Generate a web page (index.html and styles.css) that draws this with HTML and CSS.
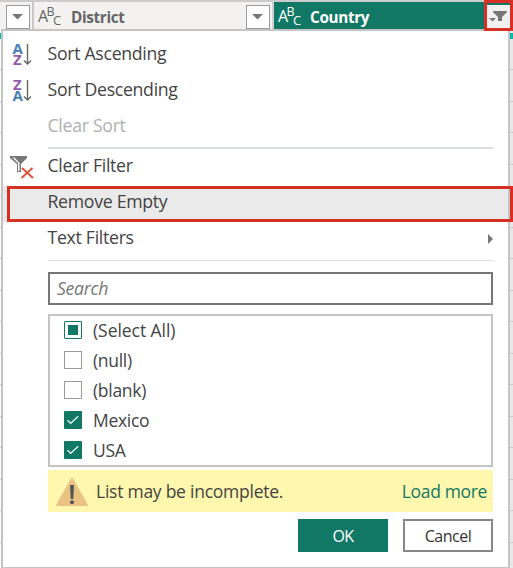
FILE: index.html
```html
<!DOCTYPE html>
<html lang="en">
<head>
<meta charset="utf-8">
<title>Column filter</title>
<link rel="stylesheet" href="styles.css">
</head>
<body>
<div class="window">
  <header class="columns">
    <div class="column column-prev"><span class="drop"><svg width="12" height="6" viewBox="0 0 12 6"><path d="M0 0h11L5.500 5.500z"/></svg></span></div>
    <div class="column column-district">
      <span class="abc"><span>A</span><span class="b">B</span><span class="c">C</span></span>
      <span class="name">District</span>
      <span class="drop"><svg width="12" height="6" viewBox="0 0 12 6"><path d="M0 0h11L5.500 5.500z"/></svg></span>
    </div>
    <div class="column column-country">
      <span class="abc"><span>A</span><span class="b">B</span><span class="c">C</span></span>
      <span class="name">Country</span>
      <span class="filter"><svg width="19" height="12" viewBox="0 0 19 12"><path d="M4 0h14v1l-5 5v4H9V6L4 1zM0 7h7L3.500 10.500z"/></svg></span>
    </div>
  </header>
  <main class="menu">
    <div class="item"><svg class="icon" width="24" height="28" viewBox="0 0 24 28"><text class="blue" x="2.500" y="13.500">A</text><text class="purple" x="3" y="25">Z</text><path class="arrow" d="M17.500 4v20M14 20.500l3.500 3.500 3.500-3.500"/></svg><span>Sort Ascending</span></div>
    <div class="item"><svg class="icon" width="24" height="28" viewBox="0 0 24 28"><text class="purple" x="3" y="13.500">Z</text><text class="blue" x="2.500" y="25">A</text><path class="arrow" d="M17.500 4v20M14 20.500l3.500 3.500 3.500-3.500"/></svg><span>Sort Descending</span></div>
    <div class="item disabled"><span>Clear Sort</span></div>
    <div class="sep thick"></div>
    <div class="item"><svg class="icon" width="26" height="28" viewBox="0 0 26 28"><path fill="#777" fill-rule="evenodd" d="M0 4h17v2l-6 6v8H7v-8L0 6zM2.500 5.500L8 11v8h1.500v-8L4.500 5.500z"/><path fill="none" stroke="#db5439" stroke-width="2" d="M12 16l11 10M22.500 16L11.500 26"/></svg><span>Clear Filter</span></div>
    <div class="item selected"><span>Remove Empty</span></div>
    <div class="item last"><span>Text Filters</span><svg class="more" width="5" height="10" viewBox="0 0 5 10"><path fill="#777" d="M0 0l5 5-5 5z"/></svg></div>
    <div class="sep thin"></div>
    <div class="search"><span>Search</span></div>
    <div class="list">
      <div class="row"><i class="box partial"></i><span class="all">(Select All)</span></div>
      <div class="row"><i class="box"></i><span>(null)</span></div>
      <div class="row"><i class="box"></i><span>(blank)</span></div>
      <div class="row"><i class="box checked"><svg width="18" height="18" viewBox="0 0 18 18"><path d="M3.500 9.300l3.200 3 7.500-7"/></svg></i><span>Mexico</span></div>
      <div class="row"><i class="box checked"><svg width="18" height="18" viewBox="0 0 18 18"><path d="M3.500 9.300l3.200 3 7.500-7"/></svg></i><span>USA</span></div>
    </div>
    <div class="notice">
      <svg width="32" height="28" viewBox="0 0 32 28"><path fill="#eac282" d="M15 .5q1-1 2 0L32 27q0 1-1 1H1q-1 0-1-1z"/><path fill="#555" d="M14 7h4l-.7 14h-2.600z"/><circle cx="16" cy="24.300" r="2" fill="#555"/></svg>
      <span class="message">List may be incomplete.</span><a class="load">Load more</a>
    </div>
    <div class="actions"><button class="ok">OK</button><button class="cancel">Cancel</button></div>
  </main>
</div>
</body>
</html>
```

FILE: styles.css
```css
*, *::before, *::after { box-sizing: border-box; }
body { margin: 0; background: #fff; color: #444; font: 18px/24px "Open Sans", "Noto Sans", sans-serif; }
.window {
  position: relative; width: 513px; height: 568px; overflow: hidden;
  background:
    linear-gradient(#01b8aa, #01b8aa) 0 33px / 100% 6px no-repeat,
    repeating-linear-gradient(transparent 0 30.470px, #c9c9c9 30.470px 31.470px) 0 39px,
    linear-gradient(90deg, #fff 50%, #e8e8e8 50%);
}
.columns { display: flex; height: 29px; border-top: 2px solid #ccc; background: #f3f2f1; }
.column { display: flex; align-items: center; height: 27px; }
.column-prev { width: 34px; padding-left: 6px; border-right: 2px solid #c8c8c8; }
.column-district { width: 240px; padding: 0 2px 0 4px; border-right: 2px solid #d0d0d0; color: #666; }
.column-country { width: 239px; padding-left: 4px; background: #117865; color: #fff; }
.name { margin-left: 8px; font-weight: 700; font-size: 15.300px; letter-spacing: -.35px; position: relative; top: 1px; }
.column-country .name { margin-left: 7px; }
.abc { position: relative; width: 25px; height: 24px; line-height: 24px; font-size: 16px; }
.abc .b { position: absolute; left: 8.500px; top: -4px; font-size: 12.500px; }
.abc .c { position: absolute; left: 15px; top: 4px; font-size: 13px; }
.drop { display: flex; align-items: center; justify-content: center; width: 24px; height: 24px; margin-top: 3px; border: 1px solid #999; background: #fff; }
.drop svg { fill: #777; }
.column-district .drop { margin-left: auto; }
.filter { position: absolute; z-index: 2; left: 484px; top: 0; width: 29px; height: 31px; padding: 8px 0 0 2px; border: 3px solid #d93025; background: linear-gradient(#117865 2px, #f0f0f0 2px); }
.filter svg { display: block; fill: #777; }
.menu { position: relative; width: 509px; height: 539px; margin-left: 1px; padding-top: 5px; border: 2px solid #c4c4c4; border-bottom-width: 1px; background: #fff; }
.item { position: relative; height: 36px; padding-left: 44.500px; line-height: 34px; white-space: nowrap; font-size: 17.700px; letter-spacing: -.3px; }
.item.disabled { color: #b0b0b0; }
.icon { position: absolute; left: 7px; top: 4px; overflow: visible; }
.icon text { font: 700 15px "Open Sans", sans-serif; }
.blue { fill: #477fb8; }
.purple { fill: #8e5bad; }
.arrow { fill: none; stroke: #666; stroke-width: 1.400; }
.sep { margin: 3px 15px -1px 45px; height: 2px; background: #dce0e3; }
.sep.thin { height: 1px; margin: 4px 15px 11px 45px; background: #ddd; }
.selected { margin-top: 2px; line-height: 30px; background: #eaeaea; }
.selected::after { content: ""; position: absolute; left: 4px; top: 0; width: 506px; height: 36px; border: 3px solid #d93025; }
.last { margin-top: -2px; }
.more { position: absolute; right: 15px; top: 14px; }
.search { height: 33px; margin: 0 15px 9px 45px; padding-left: 7px; border: 2px solid #767676; font-size: 17.700px; line-height: 28px; font-style: italic; letter-spacing: -.3px; color: #777; }
.list { height: 153px; margin: 0 15px 3px 45px; padding-left: 14px; border: 2px solid #c4c4c4; overflow: hidden; }
.row { display: flex; align-items: center; height: 30px; padding-bottom: 2px; font-size: 17.500px; letter-spacing: -.3px; }
.all { letter-spacing: -.05px; }
.box { width: 18px; height: 18px; margin-right: 11px; border: 1px solid #999; }
.partial { border: 1px solid #117865; border-radius: 1px; padding: 3px; background: #117865 content-box; }
.checked { border: 0; border-radius: 1px; background: #117865; }
.checked svg { display: block; fill: none; stroke: #e8f5f2; stroke-width: 1.300; }
.notice { display: flex; align-items: center; height: 42px; margin: 0 15px 7px 45px; padding: 0 6px 0 8px; background: #fef7ad; font-size: 17.500px; letter-spacing: -.35px; }
.notice svg { margin-top: 2px; }
.message { margin-left: 8px; letter-spacing: -.25px; }
.load { margin-left: auto; color: #117865; }
.actions { display: flex; justify-content: flex-end; gap: 15px; margin-right: 15px; }
.actions button { width: 90px; height: 33px; padding: 1px 0 0; font: 16px "Open Sans", sans-serif; letter-spacing: -.5px; }
.ok { border: 0; background: #117865; color: #fff; }
.actions .cancel { padding-bottom: 0; border: 2px solid #888; background: #fff; color: #333; }
```
